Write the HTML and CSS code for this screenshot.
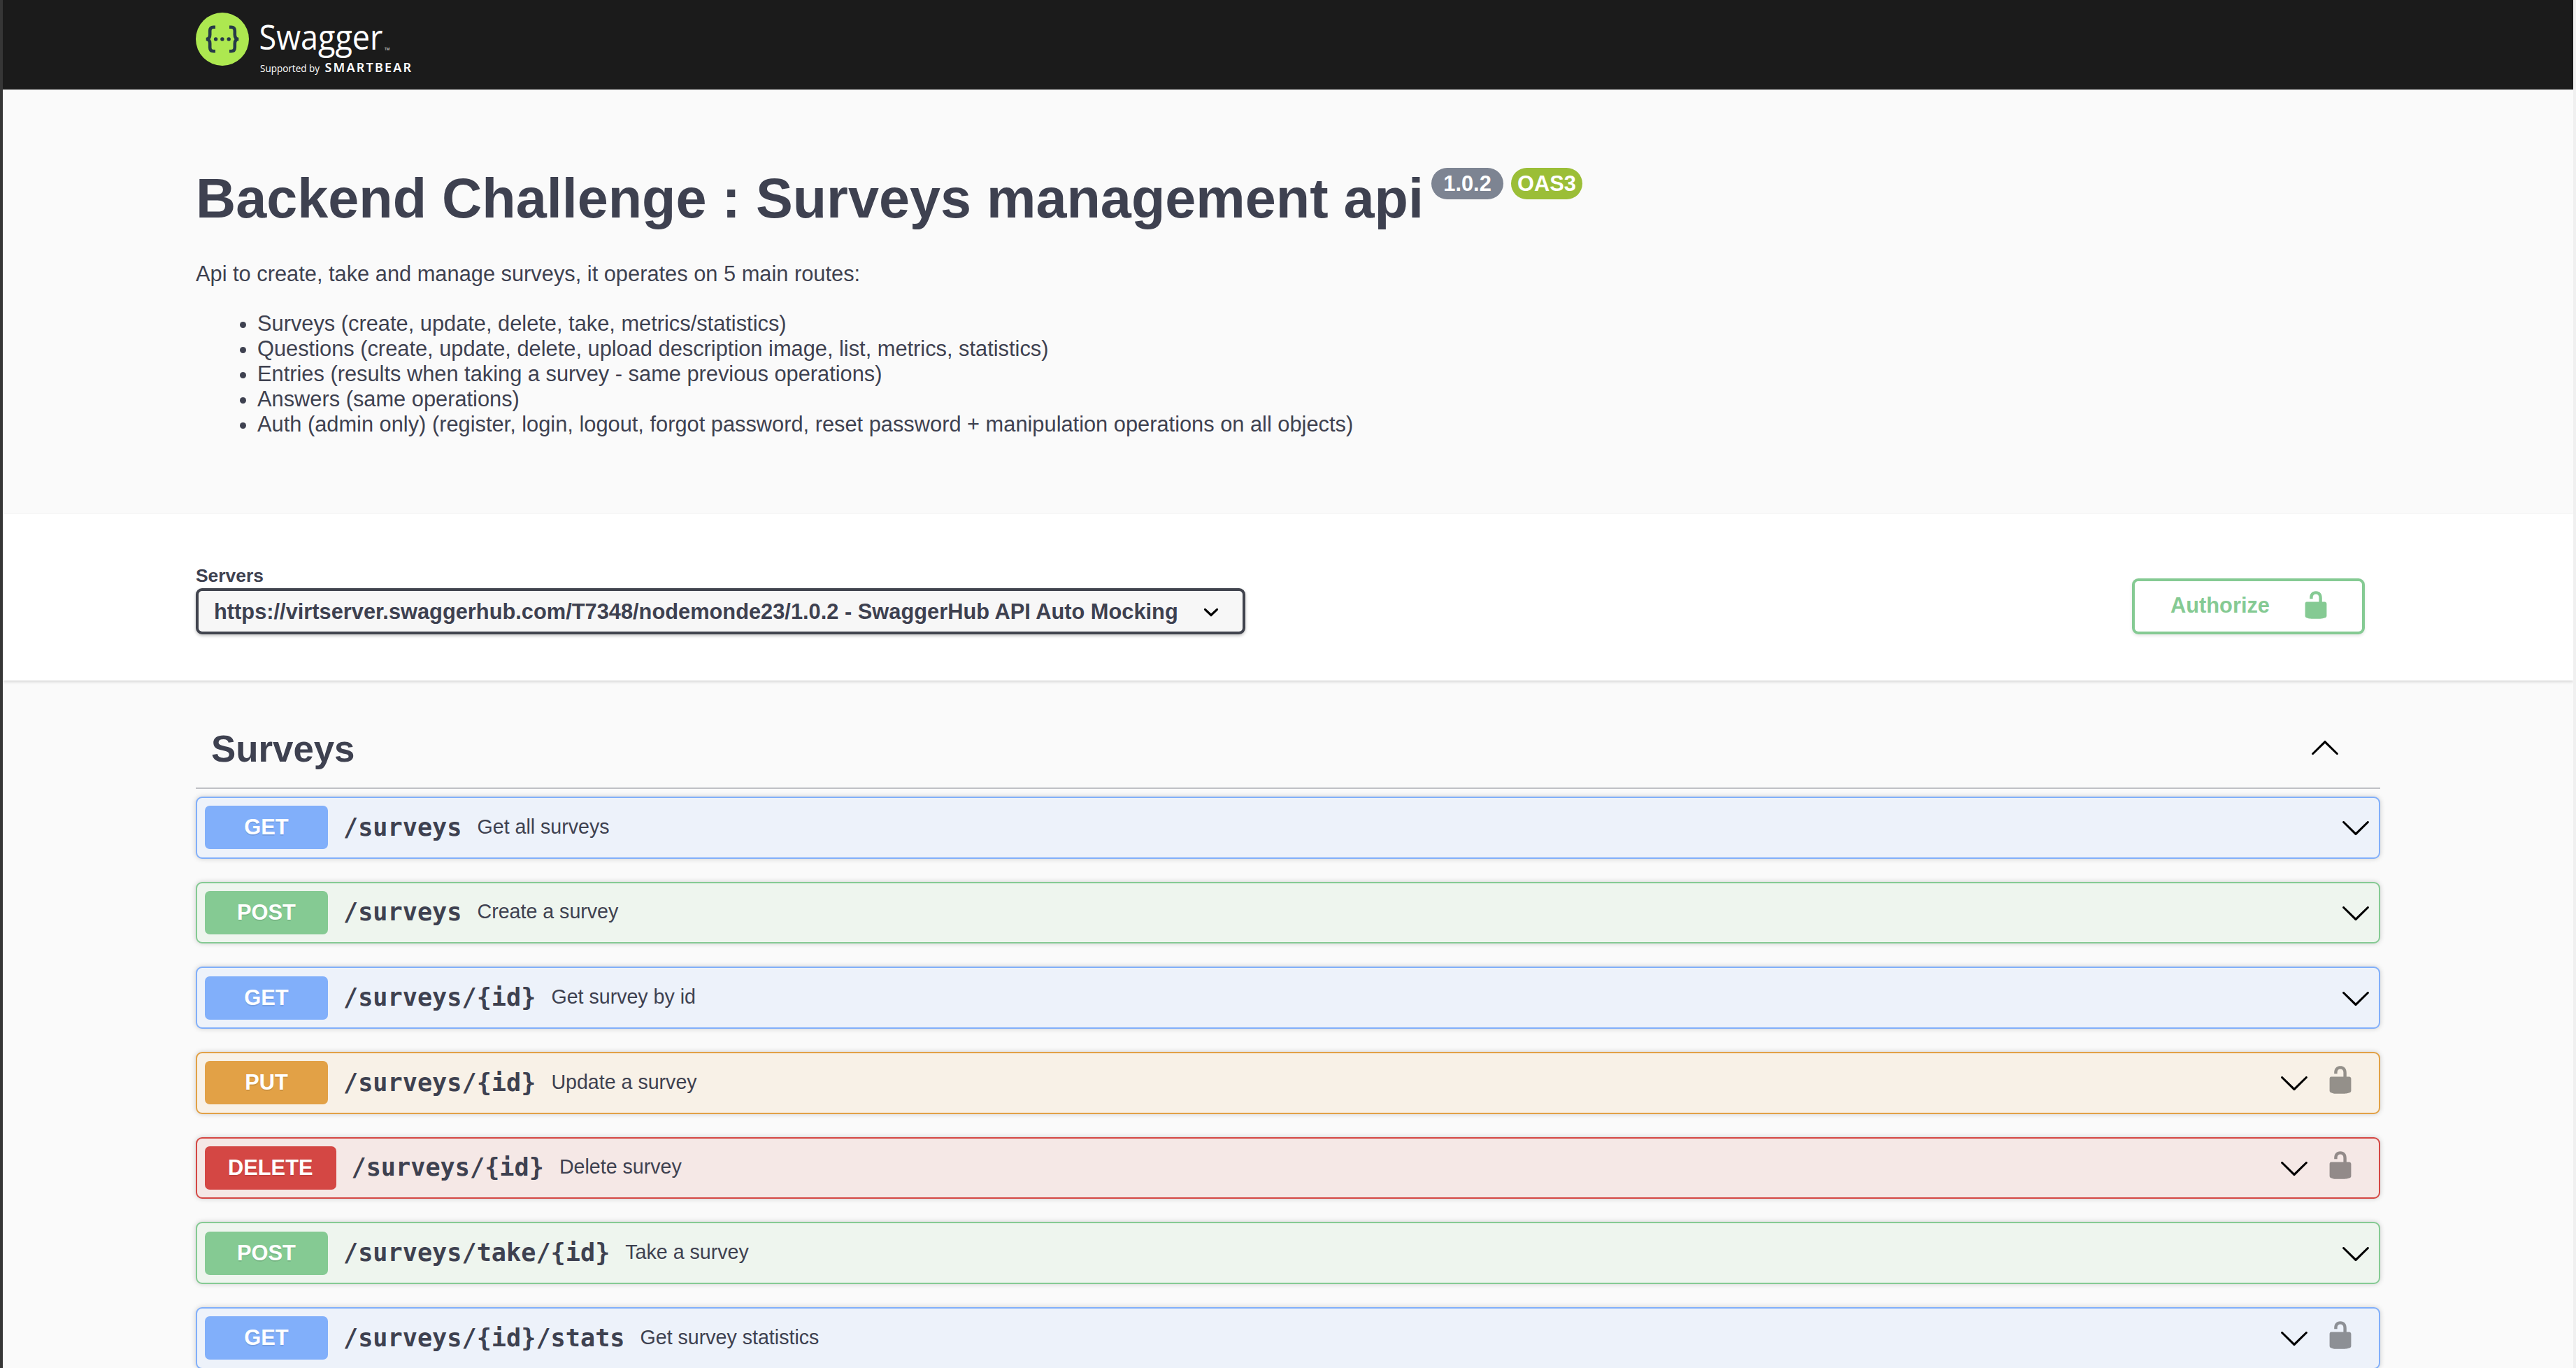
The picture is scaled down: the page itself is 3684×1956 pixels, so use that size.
FILE: index.html
```html
<!DOCTYPE html>
<html lang="en">
<head>
<meta charset="utf-8">
<title>Swagger UI</title>
<link rel="stylesheet" href="styles.css">
</head>
<body>
<svg class="symbols" aria-hidden="true">
  <symbol id="unlocked" viewBox="0 0 20 20"><path d="M15.8 8H14V5.6C14 2.703 12.665 1 10 1 7.334 1 6 2.703 6 5.6V6h2v-.801C8 3.754 8.797 3 10 3c1.203 0 2 .754 2 2.199V8H4c-.553 0-1 .646-1 1.199V17c0 .549.428 1.139.951 1.307l1.197.387C5.672 18.861 6.55 19 7.1 19h5.8c.549 0 1.428-.139 1.951-.307l1.196-.387c.524-.167.953-.757.953-1.306V9.199C17 8.646 16.352 8 15.8 8z"/></symbol>
  <symbol id="arrow-down" viewBox="0 0 20 20"><path d="M17.418 6.109c.272-.268.709-.268.979 0s.271.701 0 .969l-7.908 7.83c-.27.268-.707.268-.979 0l-7.908-7.83c-.27-.268-.27-.701 0-.969.271-.268.709-.268.979 0L10 13.25z"/></symbol>
  <symbol id="arrow-up" viewBox="0 0 20 20"><path d="M17.418 14.908c.272.27.709.27.979 0s.271-.701 0-.969l-7.908-7.83c-.27-.268-.707-.268-.979 0l-7.908 7.83c-.27.268-.27.701 0 .969.271.268.709.268.979 0L10 7.767z"/></symbol>
  <symbol id="select-arrow" viewBox="0 0 20 20"><path d="M13.418 7.859a.695.695 0 01.978 0 .68.68 0 010 .969l-3.908 3.83a.697.697 0 01-.979 0l-3.908-3.83a.68.68 0 010-.969.695.695 0 01.978 0L10 11l3.418-3.141z"/></symbol>
</svg>

<header class="topbar">
  <div class="wrapper">
    <svg class="logo" viewBox="0 0 320 100">
      <circle cx="38" cy="38" r="38" fill="#ade850"/>
      <g fill="none" stroke="#263a48" stroke-width="4.6">
        <path d="M28 20.8h-2.500c-4 0-5.300 2-5.300 5.500v5.200c0 4-1.200 6.500-5.500 6.500 4.300 0 5.500 2.500 5.500 6.500v5.200c0 3.500 1.300 5.500 5.300 5.500H28"/>
        <path d="M48 20.8h2.500c4 0 5.300 2 5.300 5.500v5.200c0 4 1.200 6.500 5.500 6.500-4.300 0-5.500 2.500-5.500 6.500v5.200c0 3.500-1.300 5.500-5.300 5.500H48"/>
      </g>
      <g fill="#263a48"><circle cx="28.600" cy="38" r="2.700"/><circle cx="37.900" cy="38" r="2.700"/><circle cx="47.200" cy="38" r="2.700"/></g>
      <text class="logo-name" x="90.500" y="53" textLength="177" lengthAdjust="spacingAndGlyphs">Swagger</text>
      <text class="logo-tm" x="270" y="53.500">TM</text>
      <text class="logo-by" x="92" y="84.500" textLength="85" lengthAdjust="spacingAndGlyphs">Supported by</text>
      <text class="logo-brand" x="184.500" y="84.500" textLength="123.500" lengthAdjust="spacing">SMARTBEAR</text>
    </svg>
  </div>
</header>

<section class="info">
  <div class="wrapper">
    <h1 class="title">Backend Challenge : Surveys management api
      <span class="badges"><small class="badge">&nbsp;1.0.2&nbsp;</small><small class="badge badge-oas">OAS3</small></span>
    </h1>
    <p class="intro">Api to create, take and manage surveys, it operates on 5 main routes:</p>
    <ul class="routes">
      <li>Surveys (create, update, delete, take, metrics/statistics)</li>
      <li>Questions (create, update, delete, upload description image, list, metrics, statistics)</li>
      <li>Entries (results when taking a survey - same previous operations)</li>
      <li>Answers (same operations)</li>
      <li>Auth (admin only) (register, login, logout, forgot password, reset password + manipulation operations on all objects)</li>
    </ul>
  </div>
</section>

<section class="schemes">
  <div class="wrapper schemes-row">
    <div class="servers">
      <span class="servers-label">Servers</span>
      <div class="select"><span>https://virtserver.swaggerhub.com/T7348/nodemonde23/1.0.2 - SwaggerHub API Auto Mocking</span><svg class="icon"><use href="#select-arrow"/></svg></div>
    </div>
    <button class="authorize"><span>Authorize</span><svg class="icon"><use href="#unlocked"/></svg></button>
  </div>
</section>

<main class="wrapper">
  <h2 class="tag"><span>Surveys</span><svg class="icon"><use href="#arrow-up"/></svg></h2>
  <div class="operations">
    <div class="op get"><span class="method">GET</span><code class="path">/surveys</code><span class="summary">Get all surveys</span><svg class="icon"><use href="#arrow-down"/></svg></div>
    <div class="op post"><span class="method">POST</span><code class="path">/surveys</code><span class="summary">Create a survey</span><svg class="icon"><use href="#arrow-down"/></svg></div>
    <div class="op get"><span class="method">GET</span><code class="path">/surveys/{id}</code><span class="summary">Get survey by id</span><svg class="icon"><use href="#arrow-down"/></svg></div>
    <div class="op put"><span class="method">PUT</span><code class="path">/surveys/{id}</code><span class="summary">Update a survey</span><svg class="icon"><use href="#arrow-down"/></svg><svg class="icon lock"><use href="#unlocked"/></svg></div>
    <div class="op delete"><span class="method">DELETE</span><code class="path">/surveys/{id}</code><span class="summary">Delete survey</span><svg class="icon"><use href="#arrow-down"/></svg><svg class="icon lock"><use href="#unlocked"/></svg></div>
    <div class="op post"><span class="method">POST</span><code class="path">/surveys/take/{id}</code><span class="summary">Take a survey</span><svg class="icon"><use href="#arrow-down"/></svg></div>
    <div class="op get"><span class="method">GET</span><code class="path">/surveys/{id}/stats</code><span class="summary">Get survey statistics</span><svg class="icon"><use href="#arrow-down"/></svg><svg class="icon lock"><use href="#unlocked"/></svg></div>
  </div>
</main>
</body>
</html>
```
FILE: styles.css
```css
* { box-sizing: border-box; }
html { height: 100%; overflow: hidden; }
body {
  margin: 0;
  height: 1956px;
  overflow: hidden;
  border-left: 4px solid #363636;
  border-right: 4px solid #f0f0f0;
  background: #fafafa;
  color: #3e4150;
  font-family: "Liberation Sans", Arial, sans-serif;
  font-size: 30.8px;
}
.symbols { display: none; }
.wrapper { width: 3124px; margin: 0 auto; }
.icon { width: 44px; height: 44px; flex: none; fill: #000; }

.topbar { height: 128px; padding-top: 18px; background: #1b1b1b; }
.logo { display: block; width: 320px; height: 100px; }
.logo text { fill: #fff; font-family: "Open Sans", "Noto Sans", sans-serif; }
.logo .logo-name { font-size: 50px; }
.logo .logo-tm { font-size: 5px; }
.logo .logo-by { font-size: 14px; }
.logo .logo-brand { font-family: "Noto Sans", sans-serif; font-size: 18px; font-weight: 600; }

.info { height: 607px; padding-top: 110px; }
.title { display: flex; gap: 11px; margin: 0; font-size: 79.200px; line-height: 91px; font-weight: 700; }
.badges { display: flex; gap: 11px; padding-top: 2px; align-items: flex-start; }
.badge {
  height: 45px;
  padding: 0 8.800px;
  border-radius: 23px;
  background: #7d8492;
  color: #fff;
  font-size: 30.800px;
  line-height: 45px;
}
.badge-oas { background: #9bbe37; }
.intro { margin: 45px 0 0; line-height: 36px; }
.routes { margin: 35px 0 0; padding-left: 88px; line-height: 36px; }

.schemes { height: 238px; padding-top: 73px; background: #fff; box-shadow: 0 2px 4px rgba(0, 0, 0, .15); }
.schemes-row { display: flex; justify-content: space-between; align-items: flex-start; }
.servers { display: flex; flex-direction: column; gap: 3px; }
.servers-label { font-size: 26.400px; line-height: 30px; font-weight: 700; }
.select {
  display: flex;
  align-items: center;
  justify-content: space-between;
  width: 1501px;
  height: 66px;
  padding: 2px 23px 0 22px;
  border: 4px solid #41444e;
  border-radius: 9px;
  background: #f7f7f7;
  box-shadow: 0 2px 4px rgba(0, 0, 0, .25);
  font-weight: 700;
}
.authorize {
  display: flex;
  align-items: flex-start;
  justify-content: space-between;
  width: 333px;
  height: 80px;
  margin: 19px 22px 0 0;
  padding: 12px 44px 0 51px;
  border: 4px solid #85ca93;
  border-radius: 9px;
  background: transparent;
  box-shadow: 0 2px 4px rgba(0, 0, 0, .1);
  color: #85ca93;
  font: 700 30.800px/46px "Liberation Sans", Arial, sans-serif;
}
.authorize .icon { fill: #85ca93; }

.tag {
  display: flex;
  align-items: center;
  justify-content: space-between;
  height: 114px;
  margin: 41px 0 11px;
  padding: 2px 57px 0 22px;
  border-bottom: 2px solid #bfc0c5;
  font-size: 52.800px;
  line-height: 60px;
}
.tag .icon { margin-bottom: 6px; }
.operations { display: flex; flex-direction: column; gap: 33px; }
.op {
  display: flex;
  align-items: center;
  height: 88.660px;
  padding: 0 11px;
  border: 2px solid;
  border-radius: 9px;
  box-shadow: 0 0 7px rgba(0, 0, 0, .19);
}
.method {
  min-width: 176px;
  height: 62px;
  padding: 0 33px;
  border-radius: 7px;
  color: #fff;
  font-weight: 700;
  line-height: 62px;
  text-align: center;
  text-shadow: 0 2px 0 rgba(0, 0, 0, .1);
}
.path { padding: 0 22px 2px; font: 700 35.200px/41px "DejaVu Sans Mono", monospace; }
.summary { flex: 1; padding-bottom: 2px; font-size: 28.600px; line-height: 33px; }
.lock { margin: 0 22px 8px; opacity: .4; }

.get { border-color: #81affa; background: #edf2fa; }
.get .method { background: #81affa; }
.post { border-color: #85ca93; background: #eef5ee; }
.post .method { background: #85ca93; }
.put { border-color: #e2a146; background: #f8f1e7; }
.put .method { background: #e2a146; }
.delete { border-color: #d44744; background: #f5e8e6; }
.delete .method { background: #d44744; }
```
